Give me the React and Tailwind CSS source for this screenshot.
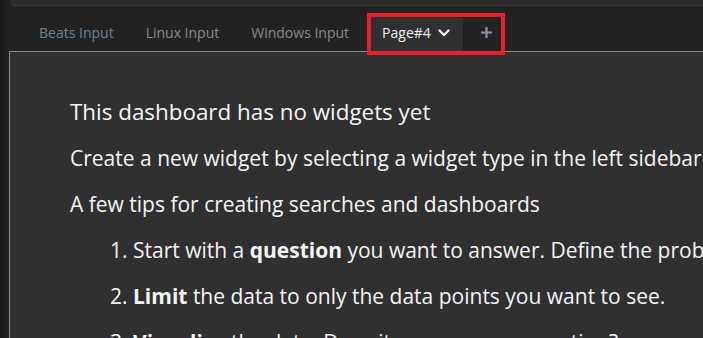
import React from "react";

export default function App() {
  return (
    <div
      className="w-[703px] h-[338px] overflow-hidden bg-[#222222] flex"
      style={{ fontFamily: '"Open Sans", "Noto Sans", sans-serif' }}
    >
      <div className="w-[9px] shrink-0 bg-gradient-to-r from-[#181818] to-[#212121]" />
      <div className="flex-1 flex flex-col min-w-0">
        <div className="h-[6px] ml-[1px] bg-[#2c2c2c] border-b border-[#383838] rounded-bl-[4px]" />
        <div className="relative h-[45px] flex items-end pl-[14px]">
          <div className="flex items-end h-[38px]">
            <div className="h-full flex items-center px-4 text-[14px] text-[#6d8294]">Beats Input</div>
            <div className="h-full flex items-center px-4 text-[14px] text-[#8a8a8a]">Linux Input</div>
            <div className="h-full flex items-center px-4 text-[14px] text-[#8a8a8a]">Windows Input</div>
            <div className="h-full flex items-center pl-[15px] pr-[13px] bg-[#303030] text-[14px] text-[#f2f2f2] gap-[7px] ml-[2px]">
              <span>Page#4</span>
              <svg width="12" height="12" viewBox="0 0 12 12" className="mt-[1px]">
                <path d="M1.5 3.5 L6 8 L10.5 3.5" fill="none" stroke="#f2f2f2" strokeWidth="2.4" strokeLinecap="round" strokeLinejoin="round" />
              </svg>
            </div>
            <div className="h-full w-[35px] flex items-center pl-[18px] bg-[#232323]">
              <svg width="11" height="11" viewBox="0 0 11 11">
                <path d="M5.5 0 V11 M0 5.5 H11" stroke="#8796a6" strokeWidth="2.2" />
              </svg>
            </div>
          </div>
          <div className="absolute left-[358px] top-[7px] w-[138px] h-[42px] border-[4px] border-[#e8202a] pointer-events-none" />
        </div>
        <div className="flex-1 bg-[#303030] border-t border-l border-[#8a8a8a] pl-[60px] pt-[46px] text-[21px] text-[#f4f4f4] whitespace-nowrap overflow-hidden">
          <p className="leading-[28px] mb-[18px] text-[22.4px]">This dashboard has no widgets yet</p>
          <p className="leading-[28px] mb-[18px]">Create a new widget by selecting a widget type in the left sidebar section Create.</p>
          <p className="leading-[28px] mb-[18px]">A few tips for creating searches and dashboards</p>
          <ol className="list-decimal pl-[63px]">
            <li className="leading-[28px] mb-[18px]">Start with a <b>question</b> you want to answer. Define the problem you want to solve.</li>
            <li className="leading-[28px] mb-[18px]"><b>Limit</b> the data to only the data points you want to see.</li>
            <li className="leading-[28px] mb-[18px]"><b>Visualize</b> the data. Does it answer your question?</li>
          </ol>
        </div>
      </div>
    </div>
  );
}
